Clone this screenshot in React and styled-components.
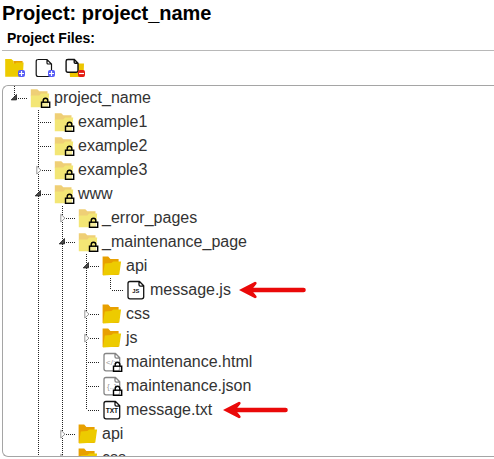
import React from "react";
import styled, { createGlobalStyle } from "styled-components";

const GlobalStyle = createGlobalStyle`
  * { box-sizing: border-box; }
  body {
    margin: 0;
    background: #fff;
    color: #333;
    font-family: "Liberation Sans", Arial, sans-serif;
    overflow: hidden;
  }
`;

const Page = styled.main`
  display: flex;
  flex-direction: column;
  height: 459px;
  padding-left: 2px;
`;

const Title = styled.h1`
  margin: 0;
  height: 28px;
  font-size: 20px;
  line-height: 27px;
  letter-spacing: -0.03px;
  color: #000;
  white-space: nowrap;
`;

const Subtitle = styled.h2`
  margin: 0;
  height: 23px;
  padding-left: 5px;
  border-bottom: 1px solid #b8b8b8;
  font-size: 14px;
  line-height: 21px;
  color: #000;
`;

const Toolbar = styled.div`
  display: flex;
  gap: 6px;
  height: 34px;
  padding: 5px 0 0 1px;
`;

const ToolButton = styled.button`
  width: 24px;
  height: 24px;
  padding: 0;
  border: 0;
  background: none;
`;

const Panel = styled.section`
  height: 372px;
  border: 1px solid #a5a5a5;
  border-right: 0;
  border-radius: 6px 0 0 6px;
  overflow: hidden;
`;

const Row = styled.div`
  display: flex;
  align-items: center;
  height: 24px;
`;

const Guide = styled.div`
  position: relative;
  flex: none;
  width: 24px;
  height: 24px;
  background-image: ${(p) =>
      p.$branch ? "repeating-linear-gradient(90deg, #222 0 1px, transparent 1px 2px)" : "none"},
    ${(p) =>
      p.$line ? "repeating-linear-gradient(180deg, #222 0 1px, transparent 1px 2px)" : "none"};
  background-repeat: no-repeat;
  background-position: 13px 12px, 11px 0;
  background-size: 12px 1px, 1px ${(p) => (p.$line === "half" ? 12 : 24)}px;
`;

const Toggle = styled.svg`
  position: absolute;
  left: 6px;
  top: 6px;
  display: block;
`;

const Icon = styled.svg`
  display: block;
  flex: none;
  margin-left: ${(p) => p.$indent || 0}px;
  overflow: visible;
`;

const Label = styled.span`
  font-size: 16px;
  line-height: 24px;
  white-space: nowrap;
`;

const Arrow = styled.svg`
  display: block;
  flex: none;
  margin: 0 0 1px ${(p) => p.$gap}px;
`;

const Lock = () => (
  <g>
    <path d="M13.2 16.5v-2q0-2.3 2.3-2.3t2.3 2.3v2" fill="none" stroke="#000" strokeWidth="1.4" />
    <rect x="11.5" y="16.2" width="8.2" height="5.1" fill="#fff" fillOpacity=".3" stroke="#000" strokeWidth="1.4" />
  </g>
);

const Folder = () => (
  <g>
    <path d="M.6 2.5h5.6l2.2 2.6h8.2v16H.6z" fill="#e8a000" />
    <path d="M2.8 9.4 9.3 9l2-1.6h7.8L17.3 20.4.9 21.5z" fill="#edcb00" />
  </g>
);

const LockedFolder = () => (
  <g>
    <path d="M.8 3.2h6.5l2 2h8.2v5H.8z" fill="#efcf76" />
    <path d="M.8 9.4h8.4l2-2h8L18 21.2H.8z" fill="#f3e675" />
    <Lock />
  </g>
);

const FileShape = ({ text, faded }) => (
  <g>
    <path
      d="M4.5 3.5h9l4.2 4.3v11q0 2-2 2H4q-2 0-2-2V5.5q0-2 2-2zM13 3.5v3.2q0 1.4 1.4 1.4h3.2"
      fill="#fff"
      stroke={faded ? "#858585" : "#111"}
      strokeWidth="1.3"
      strokeLinejoin="round"
    />
    <text
      x="9.9"
      y={faded ? 15.2 : 15}
      textAnchor="middle"
      fontFamily="Liberation Sans, Arial, sans-serif"
      fontSize={faded ? 8 : text === "TXT" ? 6.6 : 5.8}
      fontWeight={faded ? 400 : 700}
      fill={faded ? "#999" : "#111"}
    >
      {text}
    </text>
    {faded && <Lock />}
  </g>
);

const glyphs = {
  locked: <LockedFolder />,
  folder: <Folder />,
  js: <FileShape text="JS" />,
  txt: <FileShape text="TXT" />,
  html: <FileShape text="</>" faded />,
  json: <FileShape text="{..}" faded />,
};

const Badge = ({ minus }) => (
  <g>
    <rect x="13" y="14" width="7" height="7" rx="2" fill={minus ? "#e41b12" : "#565cf5"} />
    <path d={minus ? "M14 17.5h5" : "M14 17.5h5M16.5 15v5"} stroke="#fff" strokeWidth="1.2" />
  </g>
);

// Guides: "1" full line, "h" line down to the branch, "0" blank.
const rows = [
  { name: "project_name", icon: "locked", guides: "h", toggle: "open" },
  { name: "example1", icon: "locked", guides: "01" },
  { name: "example2", icon: "locked", guides: "01" },
  { name: "example3", icon: "locked", guides: "01", toggle: "closed" },
  { name: "www", icon: "locked", guides: "01", toggle: "open" },
  { name: "_error_pages", icon: "locked", guides: "011", toggle: "closed" },
  { name: "_maintenance_page", icon: "locked", guides: "011", toggle: "open" },
  { name: "api", icon: "folder", guides: "0111", toggle: "open" },
  { name: "message.js", icon: "js", guides: "0111h", arrow: { width: 67, gap: 8 } },
  { name: "css", icon: "folder", guides: "0111", toggle: "closed" },
  { name: "js", icon: "folder", guides: "0111", toggle: "closed" },
  { name: "maintenance.html", icon: "html", guides: "0111" },
  { name: "maintenance.json", icon: "json", guides: "0111" },
  { name: "message.txt", icon: "txt", guides: "011h", arrow: { width: 65, gap: 11 } },
  { name: "api", icon: "folder", guides: "011", toggle: "closed" },
  { name: "css", icon: "folder", guides: "011", toggle: "closed" },
];

const TreeRow = ({ name, icon, guides, toggle, arrow }) => (
  <Row>
    {[...guides].map((g, i) => {
      const last = i === guides.length - 1;
      return (
        <Guide key={i} $line={g === "h" ? "half" : g === "1"} $branch={last}>
          {last && toggle && (
            <Toggle width="12" height="12" viewBox="0 0 12 12">
              {toggle === "open" ? (
                <path d="M7.5 2.5v5.4H2.2z" fill="#484848" stroke="#222" strokeWidth=".8" />
              ) : (
                <path d="M3.8 2.2v7.8L8 6.1z" fill="#fff" stroke="#999" />
              )}
            </Toggle>
          )}
        </Guide>
      );
    })}
    <Icon width="24" height="24" viewBox="0 0 24 24" $indent={3}>
      {glyphs[icon]}
    </Icon>
    <Label>{name}</Label>
    {arrow && (
      <Arrow width={arrow.width} height="18" viewBox={`0 0 ${arrow.width} 18`} $gap={arrow.gap}>
        <path
          d={`M10 9H${arrow.width - 2.5}`}
          stroke="#ea0909"
          strokeWidth="4.6"
          strokeLinecap="round"
        />
        <path d="M0 9 16 .7q2 .2 1.6 2L12.5 9l5.1 6.3q.4 1.8-1.6 2z" fill="#ea0909" />
      </Arrow>
    )}
  </Row>
);

export default function App() {
  return (
    <Page>
      <GlobalStyle />
      <Title>Project: project_name</Title>
      <Subtitle>Project Files:</Subtitle>
      <Toolbar>
        <ToolButton aria-label="New folder">
          <Icon width="24" height="24" viewBox="-2 0 24 24">
            <path d="M.2 3h6.2l2 2H.2z" fill="#edcb00" />
            <path d="M8.4 5h9.2v3H8.4z" fill="#e8a000" />
            <path d="M.2 4.8h8.2v2.6h2l1-.8h7.2l-.8 14.1H.2z" fill="#edcb00" />
            <Badge />
          </Icon>
        </ToolButton>
        <ToolButton aria-label="New file">
          <Icon width="24" height="24" viewBox="-2 0 24 24">
            <path
              d="M3 3.5h9l4.5 4.5v10.5q0 2-2 2H3.2q-2 0-2-2v-13q0-2 2-2zM12 3.5V7q0 1 1 1h3.5"
              fill="#fff"
              stroke="#111"
              strokeWidth="1.2"
            />
            <Badge />
          </Icon>
        </ToolButton>
        <ToolButton aria-label="Delete">
          <Icon width="24" height="24" viewBox="-2 0 24 24">
            <path d="M4 8h8l1.5-.5H19L18.5 21H5z" fill="#edc600" />
            <path
              d="M2.5 3.5h6.8l3.7 3.7v7.3q0 1.7-1.7 1.7H2.8q-1.7 0-1.7-1.7V5.2q0-1.7 1.7-1.7zM9.2 3.5v2.7q0 1 1 1H13"
              fill="#fff"
              stroke="#111"
              strokeWidth="1.4"
            />
            <Badge minus />
          </Icon>
        </ToolButton>
      </Toolbar>
      <Panel>
        {rows.map((row, i) => (
          <TreeRow key={i} {...row} />
        ))}
      </Panel>
    </Page>
  );
}
